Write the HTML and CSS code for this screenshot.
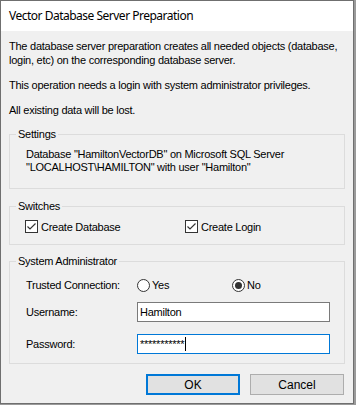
FILE: index.html
```html
<!DOCTYPE html>
<html>
<head>
<meta charset="utf-8">
<link rel="stylesheet" href="styles.css">
</head>
<body>
<div class="window">
  <div class="titlebar">Vector Database Server Preparation</div>
  <div class="content">
    <p class="intro first">The database server preparation creates all needed objects (database, login, etc) on the corresponding database server.</p>
    <p class="intro">This operation needs a login with system administrator privileges.</p>
    <p class="intro">All existing data will be lost.</p>

    <fieldset class="group settings">
      <legend>Settings</legend>
      <div class="group-body">
        <div class="settings-text">Database "HamiltonVectorDB" on Microsoft SQL Server<br>"LOCALHOST\HAMILTON" with user "Hamilton"</div>
      </div>
    </fieldset>

    <fieldset class="group switches">
      <legend>Switches</legend>
      <div class="switch-row">
        <label class="check check-db">
          <svg class="checkbox" width="13" height="13" viewBox="0 0 13 13"><rect x="0.5" y="0.5" width="12" height="12" fill="#fff" stroke="#333"/><path d="M2.5 6.5 L5 9 L10.5 3.5" fill="none" stroke="#333" stroke-width="1.2"/></svg>
          <span>Create Database</span>
        </label>
        <label class="check">
          <svg class="checkbox" width="13" height="13" viewBox="0 0 13 13"><rect x="0.5" y="0.5" width="12" height="12" fill="#fff" stroke="#333"/><path d="M2.5 6.5 L5 9 L10.5 3.5" fill="none" stroke="#333" stroke-width="1.2"/></svg>
          <span>Create Login</span>
        </label>
      </div>
    </fieldset>

    <fieldset class="group admin">
      <legend>System Administrator</legend>
      <div class="group-body">
        <div class="form-row row-trusted">
          <span class="field-label">Trusted Connection:</span>
          <label class="radio radio-yes">
            <svg width="13" height="13" viewBox="0 0 13 13"><circle cx="6.5" cy="6.5" r="6" fill="#fff" stroke="#333"/></svg>
            <span>Yes</span>
          </label>
          <label class="radio">
            <svg width="13" height="13" viewBox="0 0 13 13"><circle cx="6.5" cy="6.5" r="6" fill="#fff" stroke="#333"/><circle cx="6.5" cy="6.5" r="3.5" fill="#333"/></svg>
            <span>No</span>
          </label>
        </div>
        <div class="form-row row-user">
          <span class="field-label">Username:</span>
          <div class="textbox">Hamilton</div>
        </div>
        <div class="form-row row-pass">
          <span class="field-label">Password:</span>
          <div class="textbox focused">***********<span class="caret"></span></div>
        </div>
      </div>
    </fieldset>

    <div class="buttons">
      <button class="btn default">OK</button>
      <button class="btn">Cancel</button>
    </div>
  </div>
</div>
</body>
</html>
```

FILE: styles.css
```css
html, body {
  margin: 0;
  padding: 0;
}
body {
  background: #9a9a9a;
  width: 356px;
  height: 405px;
  overflow: hidden;
}
.window {
  width: 352px;
  height: 402px;
  border: 1px solid #6f6f6f;
  background: #f0f0f0;
  font-family: "Liberation Sans", Arial, sans-serif;
  font-size: 11px;
  letter-spacing: -0.25px;
  color: #000;
  display: flex;
  flex-direction: column;
}
.titlebar {
  height: 30px;
  background: #fff;
  font-family: "Noto Sans", "Open Sans", sans-serif;
  font-size: 12px;
  letter-spacing: -0.5px;
  line-height: 30px;
  padding-left: 8px;
  color: #000;
}
.content {
  padding: 8px 8px 0 8px;
}
.intro {
  margin: 11px 0 0 0;
  line-height: 14px;
}
.intro.first {
  margin-top: 0;
}
.group {
  margin: 10px 0 0 0;
  padding: 0 6px;
  border: 1px solid #dcdcdc;
  min-width: 0;
}
.group legend {
  padding: 0 2px;
  line-height: 14px;
}
.group-body {
  padding-left: 10px;
}
.settings .group-body {
  padding-top: 7px;
  padding-bottom: 14px;
}
.settings-text {
  line-height: 13px;
}
.switches {
  margin-top: 10px;
}
.switch-row {
  display: flex;
  padding: 7px 0 11px 9px;
  height: 13px;
  align-items: center;
}
.check {
  display: flex;
  align-items: center;
  gap: 3px;
}
.check-db {
  width: 160px;
}
.check svg, .radio svg {
  display: block;
  flex: none;
}
.admin {
  margin-top: 9px;
}
.admin .group-body {
  padding-top: 7px;
  padding-bottom: 9px;
}
.form-row {
  display: flex;
  align-items: center;
  height: 20px;
}
.row-user {
  margin-top: 7px;
}
.row-pass {
  margin-top: 12px;
}
.field-label {
  width: 111px;
  flex: none;
}
.radio {
  display: flex;
  align-items: center;
  gap: 2px;
}
.radio-yes {
  width: 95px;
}
.textbox {
  height: 18px;
  border: 1px solid #7a7a7a;
  background: #fff;
  line-height: 18px;
  padding-left: 2px;
  box-sizing: content-box;
  width: 189px;
  display: flex;
  align-items: center;
}
.textbox.focused {
  border-color: #0078d7;
}
.caret {
  display: inline-block;
  width: 1px;
  height: 14px;
  background: #000;
  margin-left: 1px;
}
.buttons {
  display: flex;
  justify-content: flex-end;
  gap: 10px;
  margin-top: 10px;
  padding-right: 1px;
}
.btn {
  width: 94px;
  height: 21px;
  border: 1px solid #adadad;
  background: #e1e1e1;
  font-family: "Liberation Sans", Arial, sans-serif;
  font-size: 12px;
  color: #000;
  padding: 0;
  margin: 0;
}
.btn.default {
  border: 2px solid #0078d7;
}
```
